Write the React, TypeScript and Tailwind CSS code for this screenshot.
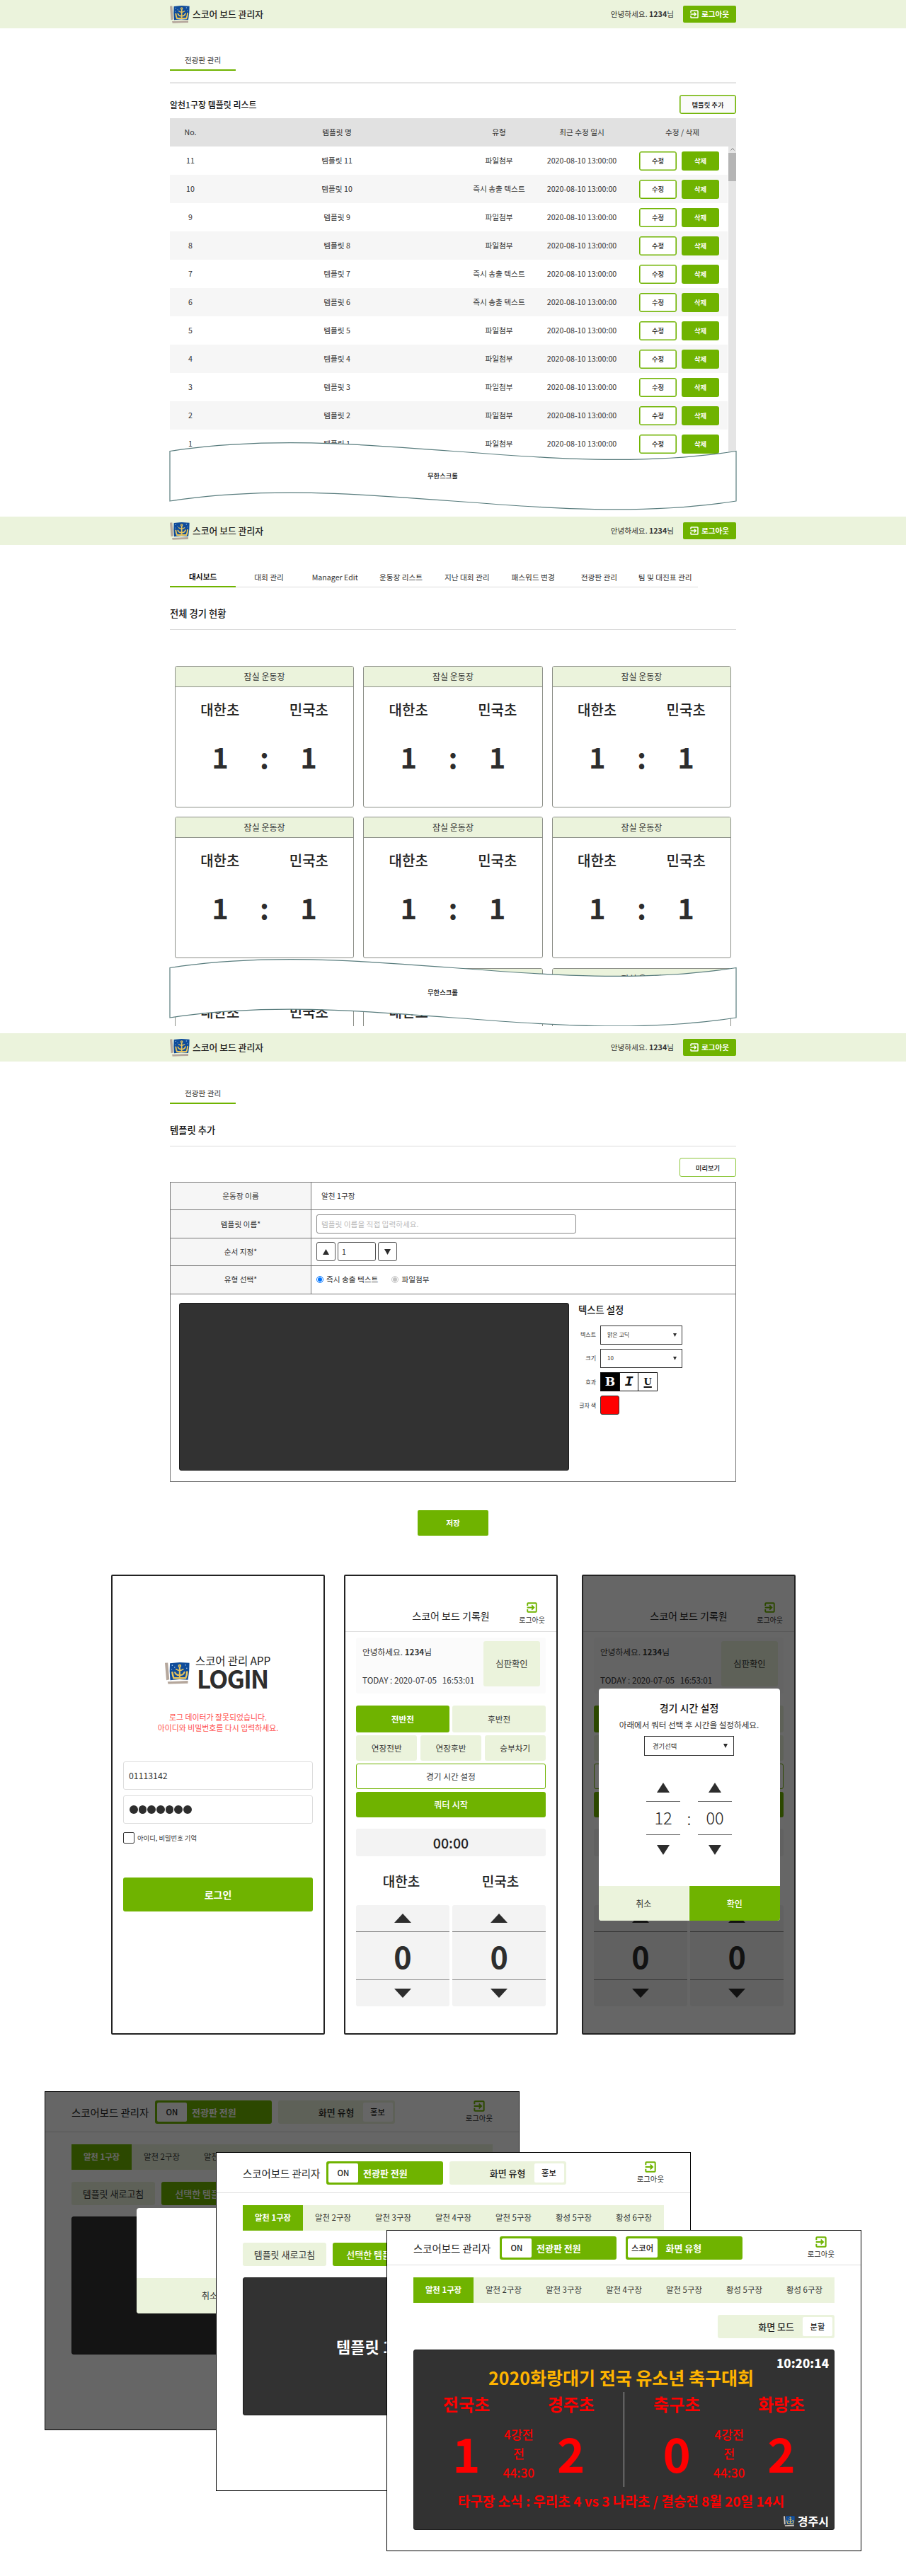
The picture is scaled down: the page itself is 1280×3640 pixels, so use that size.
import React from "react";

type Kids = { children?: React.ReactNode };

function Logo({ className = "", light = false }: { className?: string; light?: boolean }) {
  const frame = light ? "#cfc8c2" : "#b5a79c";
  return (
    <svg viewBox="0 0 84 74" className={className} preserveAspectRatio="none">
      <path d="M0 2 L10 1 L15 58 L5 60 Z" fill={frame} />
      <path d="M9 65 L78 62 L78 71 L11 73 Z" fill={frame} />
      <path d="M17 3 L50 0 L83 2 L82 30 L78 59 L48 57 L18 60 L16 30 Z" fill="#0f4c9a" />
      <g stroke="#e8c45c" strokeWidth="5" fill="none" strokeLinecap="round">
        <path d="M50 18 V50" />
        <circle cx="50" cy="12" r="3.5" strokeWidth="4" />
        <path d="M38 23 Q50 32 62 23" strokeWidth="4" />
        <path d="M34 34 Q38 44 50 43 Q62 44 66 33" />
        <path d="M25 34 Q26 44 30 53 H70 Q75 43 75 32" strokeWidth="6" />
      </g>
      <g fill="#9fc3ea">
        <circle cx="25" cy="10" r="2" />
        <circle cx="33" cy="17" r="1.8" />
        <circle cx="70" cy="9" r="2" />
        <circle cx="74" cy="20" r="1.8" />
        <circle cx="23" cy="24" r="1.6" />
      </g>
    </svg>
  );
}

function ExitIcon({ className = "" }: { className?: string }) {
  return (
    <svg viewBox="0 0 24 24" className={className} fill="none" stroke="currentColor" strokeWidth="3">
      <path d="M2 8 V3.5 A1.5 1.5 0 0 1 3.5 2 H20.5 A1.5 1.5 0 0 1 22 3.5 V20.5 A1.5 1.5 0 0 1 20.5 22 H3.5 A1.5 1.5 0 0 1 2 20.5 V16" />
      <path d="M1 12 H16 M11.5 7 L16.5 12 L11.5 17" />
    </svg>
  );
}

function Tri({ down = false, className = "" }: { down?: boolean; className?: string }) {
  return (
    <svg viewBox="0 0 10 6" preserveAspectRatio="none" className={className}>
      <path d={down ? "M0 0 H10 L5 6 Z" : "M0 6 H10 L5 0 Z"} fill="#2d2d2d" />
    </svg>
  );
}

function Header() {
  return (
    <header className="h-10 bg-[#ebf3dc]">
      <div className="mx-auto flex h-full w-[800px] items-center">
        <Logo className="h-[25px] w-7" />
        <h1 className="ml-1 text-[12.8px] font-medium text-[#222]">스코어 보드 관리자</h1>
        <p className="ml-auto text-[10.67px] text-[#333]">
          안녕하세요. <b className="font-bold">1234</b>님
        </p>
        <button className="ml-[13px] flex h-6 w-[75px] items-center justify-center gap-[4px] rounded-[2px] bg-[#6fb300] text-[10.67px] font-bold text-white">
          <ExitIcon className="h-3 w-3" />
          로그아웃
        </button>
      </div>
    </header>
  );
}

function Wave({ className }: { className: string }) {
  return (
    <div className={"absolute left-[239px] h-[98px] w-[802px] " + className}>
      <svg viewBox="0 0 802 98" className="absolute inset-0 h-full w-full">
        <path
          d="M1 14.5 C267.7 -27 534.3 56 801 14.5 V85 C534.3 126.5 267.7 43.5 1 85 Z"
          fill="#fff"
          stroke="#587c7d"
          strokeWidth="1.2"
        />
      </svg>
      <span className="absolute left-[365px] top-[42px] text-[9.33px] font-medium text-[#111]">무한스크롤</span>
    </div>
  );
}

const rowCols = "grid grid-cols-[58px_356px_102px_132px_1fr] items-center text-center";

function TemplateList() {
  const rows = [11, 10, 9, 8, 7, 6, 5, 4, 3, 2, 1];
  const instant = [10, 7, 6];
  return (
    <section className="relative h-[730px] overflow-hidden">
      <Header />
      <div className="mx-auto w-[800px]">
        <nav className="mt-[31px] flex h-[29px] w-[93.3px] items-center justify-center border-b-2 border-[#6fb300] text-[10.67px]">
          전광판 관리
        </nav>
        <hr className="mt-4 border-0 border-t-2 border-[#e5e5e5]" />
        <div className="mt-4 flex h-[27px] items-center justify-between">
          <h2 className="text-[12px] font-medium text-[#111]">알천1구장 템플릿 리스트</h2>
          <button className="h-[27px] w-20 rounded-[3px] border border-[#6fb300] bg-[#fafafa] text-[9.33px] font-medium text-[#111] shadow-[inset_0_0_0_0.6px_#6fb300]">
            템플릿 추가
          </button>
        </div>
        <div className={rowCols + " mt-[6px] h-10 bg-[#e1e1e1] text-[10.67px]"}>
          <span>No.</span>
          <span>템플릿 명</span>
          <span>유형</span>
          <span>최근 수정 일시</span>
          <span>수정 / 삭제</span>
        </div>
        <div className="flex justify-between">
          <div className="w-[788px]">
            {rows.map((n) => (
              <div key={n} className={rowCols + " h-10 text-[10.67px] even:bg-[#f6f6f6]"}>
                <span>{n}</span>
                <span>템플릿 {n}</span>
                <span>{instant.includes(n) ? "즉시 송출 텍스트" : "파일첨부"}</span>
                <span>2020-08-10 13:00:00</span>
                <span className="flex gap-[7px] pl-[15px] text-[9.33px]">
                  <button className="h-[27px] w-[53px] rounded-[3px] border border-[#6fb300] bg-white font-medium text-[#111] shadow-[inset_0_0_0_0.6px_#6fb300]">
                    수정
                  </button>
                  <button className="h-[27px] w-[53px] rounded-[3px] bg-[#6fb300] font-bold text-white">삭제</button>
                </span>
              </div>
            ))}
          </div>
          <div className="flex w-[11px] flex-col items-center bg-[#e5e5e5]">
            <svg viewBox="0 0 10 9" className="h-[9px] w-[10px]">
              <path d="M2.5 5.5 L5 2.5 L7.5 5.5" stroke="#777" strokeWidth=".9" fill="none" />
            </svg>
            <div className="h-10 w-full bg-[#b5b5b5]" />
          </div>
        </div>
      </div>
      <Wave className="top-[623px]" />
    </section>
  );
}

function MatchCard() {
  return (
    <article className="h-[200px] rounded-[3px] border border-[#8c8f88] bg-white">
      <div className="flex h-[29px] items-center justify-center rounded-t-[2px] border-b border-[#8c8f88] bg-[#ebf3dc] text-[12px]">
        잠실 운동장
      </div>
      <div className="mt-[18px] grid grid-cols-2 text-center text-[20px] font-medium leading-7 text-[#222]">
        <span>대한초</span>
        <span>민국초</span>
      </div>
      <div className="mt-[23px] grid grid-cols-[84px_1fr_84px] px-[21px] text-center text-[40px] font-bold leading-[58px] text-[#2d2d2d]">
        <span>1</span>
        <span>:</span>
        <span>1</span>
      </div>
    </article>
  );
}

function Dashboard() {
  const tabs = ["대시보드", "대회 관리", "Manager Edit", "운동장 리스트", "지난 대회 관리", "패스워드 변경", "전광판 관리", "팀 및 대진표 관리"];
  return (
    <section className="relative h-[720px] overflow-hidden">
      <Header />
      <div className="mx-auto w-[800px]">
        <nav className="mt-[32px] flex text-[10.67px]">
          {tabs.map((t, i) => (
            <a
              key={t}
              className={
                "flex h-[28px] w-[93.3px] items-center justify-center " +
                (i === 0 ? "border-b-2 border-[#6fb300] font-bold text-[#111]" : "border-b border-[#dcdcdc]")
              }
            >
              {t}
            </a>
          ))}
        </nav>
        <h2 className="mt-[27px] text-[13.33px] font-medium leading-5 text-[#111]">전체 경기 현황</h2>
        <hr className="mt-3 border-0 border-t border-[#dcdcdc]" />
        <div className="ml-[7px] mt-[51px] grid w-[786px] grid-cols-3 gap-[13.3px]">
          {Array.from({ length: 9 }, (_, i) => (
            <MatchCard key={i} />
          ))}
        </div>
      </div>
      <Wave className="top-[623px]" />
    </section>
  );
}

function FormRow({ label, children }: Kids & { label: string }) {
  return (
    <div className="flex h-[39.4px] border-b border-[#777] text-[10.67px]">
      <div className="flex w-[199px] items-center justify-center border-r border-[#777] bg-[#f6f6f6]">{label}</div>
      <div className="flex flex-1 items-center pl-[7px]">{children}</div>
    </div>
  );
}

function SettingRow({ label, children }: Kids & { label: string }) {
  return (
    <div className="mb-[6.3px] flex h-[27px] items-center text-[8px]">
      <span className="mr-[6px] w-[25px] text-right">{label}</span>
      {children}
    </div>
  );
}

function MiniSelect({ children }: Kids) {
  return (
    <div className="flex h-[27px] w-[116px] items-center justify-between border border-[#333] pl-[9px] pr-[7px]">
      <span>{children}</span>
      <Tri down className="h-[5px] w-[5px]" />
    </div>
  );
}

function Radio({ on = false }: { on?: boolean }) {
  return (
    <span
      className={
        "flex h-[10px] w-[10px] items-center justify-center rounded-full border bg-white " +
        (on ? "border-[#0075ff]" : "border-[#c4c4c4]")
      }
    >
      <span className={"h-[6px] w-[6px] rounded-full " + (on ? "bg-[#0075ff]" : "bg-[#c4c4c4]")} />
    </span>
  );
}

function TemplateForm() {
  return (
    <section className="h-[765px]">
      <Header />
      <div className="mx-auto w-[800px]">
        <nav className="mt-[31px] flex h-[29px] w-[93.3px] items-center justify-center border-b-2 border-[#6fb300] text-[10.67px]">
          전광판 관리
        </nav>
        <h2 className="mt-[27px] text-[13.33px] font-medium leading-5 text-[#111]">템플릿 추가</h2>
        <hr className="mt-3 border-0 border-t border-[#dcdcdc]" />
        <div className="mt-4 flex justify-end">
          <button className="h-[27px] w-20 rounded-[3px] border border-[#8cc63a] bg-white text-[9.33px] font-medium text-[#111]">
            미리보기
          </button>
        </div>
        <div className="mt-[7px] h-[424px] border border-[#777]">
          <FormRow label="운동장 이름">
            <span className="ml-[7px]">알천 1구장</span>
          </FormRow>
          <FormRow label="템플릿 이름*">
            <div className="flex h-[27px] w-[367px] items-center rounded-[3px] border border-[#888] pl-[6px] text-[#bbb]">
              템플릿 이름을 직접 입력하세요.
            </div>
          </FormRow>
          <FormRow label="순서 지정*">
            <div className="flex gap-[3px]">
              <button className="flex h-[27px] w-[27px] items-center justify-center rounded-[3px] border border-[#555]">
                <Tri className="h-2 w-[9px]" />
              </button>
              <div className="flex h-[27px] w-[54px] items-center rounded-[3px] border border-[#555] pl-[5px]">1</div>
              <button className="flex h-[27px] w-[27px] items-center justify-center rounded-[3px] border border-[#555]">
                <Tri down className="h-2 w-[9px]" />
              </button>
            </div>
          </FormRow>
          <FormRow label="유형 선택*">
            <Radio on />
            <span className="ml-[4px] mr-[19px]">즉시 송출 텍스트</span>
            <Radio />
            <span className="ml-[4px]">파일첨부</span>
          </FormRow>
          <div className="flex pl-3 pt-3">
            <div className="h-[237px] w-[551px] rounded-[3px] border border-[#1c1c1c] bg-[#323232]" />
            <div className="ml-[13px]">
              <h3 className="mb-[12px] text-[13.33px] font-medium leading-5 text-[#111]">텍스트 설정</h3>
              <SettingRow label="텍스트">
                <MiniSelect>맑은 고딕</MiniSelect>
              </SettingRow>
              <SettingRow label="크기">
                <MiniSelect>10</MiniSelect>
              </SettingRow>
              <SettingRow label="효과">
                <div className="flex h-[27px] w-[81px] divide-x divide-[#111] border border-[#111] text-center font-['Liberation_Mono'] text-[20px] font-bold leading-[25px] text-[#111]">
                  <span className="flex-1 bg-black font-['DejaVu_Serif'] text-[17px] text-white">B</span>
                  <span className="flex-1 italic">I</span>
                  <span className="flex-1 font-['DejaVu_Serif'] text-[13px] underline decoration-[1.5px] underline-offset-2">U</span>
                </div>
              </SettingRow>
              <SettingRow label="글자 색">
                <div className="h-[27px] w-[27px] rounded-[3px] border border-[#333] bg-[#f00]" />
              </SettingRow>
            </div>
          </div>
        </div>
        <button className="mx-auto mt-10 block h-9 w-[100px] rounded-[2px] bg-[#6fb300] text-[10.67px] font-bold text-white">
          저장
        </button>
      </div>
    </section>
  );
}

function Phone({ children }: Kids) {
  return <div className="relative h-[650px] w-[302px] overflow-hidden rounded-[2px] border-2 border-[#222] bg-white">{children}</div>;
}

function LoginPhone() {
  return (
    <Phone>
      <div className="flex flex-col px-[15px] pt-[107px]">
        <div className="flex h-[52px] items-center pl-[59px]">
          <Logo className="mt-[8px] h-[31px] w-[35px]" />
          <div className="ml-2">
            <p className="text-[15.5px] leading-[22px] tracking-[-0.1px] text-[#222]">스코어 관리 APP</p>
            <p className="ml-[2px] text-[35px] font-bold leading-[28px] tracking-[-1.6px] text-[#2d2d2d]">LOGIN</p>
          </div>
        </div>
        <p className="mt-[33px] text-center text-[10.9px] leading-[15px] text-[#ff5050]">
          로그 데이터가 잘못되었습니다.
          <br />
          아이디와 비밀번호를 다시 입력하세요.
        </p>
        <div className="mt-[40px] flex h-10 items-center rounded-[3px] border border-[#ddd] pl-[7px] text-[12.3px]">01113142</div>
        <div className="mt-2 flex h-10 items-center gap-[1px] rounded-[3px] border border-[#ddd] pl-2">
          {Array.from({ length: 7 }, (_, i) => (
            <span key={i} className="h-[11.7px] w-[11.7px] rounded-full bg-[#2d2d2d]" />
          ))}
        </div>
        <div className="mt-3 flex items-center gap-1 text-[9.33px]">
          <span className="h-4 w-4 rounded-[2px] border border-[#333]" />
          아이디, 비밀번호 기억
        </div>
        <button className="mt-12 h-12 rounded-[3px] bg-[#6fb300] text-[14px] font-bold text-white">로그인</button>
      </div>
    </Phone>
  );
}

function ScoreStepper() {
  return (
    <div className="flex h-[143px] flex-1 flex-col rounded-[3px] bg-[#f3f3f3]">
      <div className="flex h-[38px] items-center justify-center border-b border-[#888]">
        <Tri className="h-[13px] w-6" />
      </div>
      <div className="flex h-[68px] items-center justify-center border-b border-[#888] text-[43px] font-bold leading-none text-[#2d2d2d]">
        0
      </div>
      <div className="flex h-[37px] items-center justify-center">
        <Tri down className="h-[13px] w-6" />
      </div>
    </div>
  );
}

function RecorderBody() {
  const pale = "flex items-center justify-center rounded-[3px] bg-[#ebf3dc] ";
  return (
    <div className="text-[11.7px]">
      <div className="relative h-[79px] border-b border-[#ddd]">
        <h2 className="pt-[46px] text-center text-[14px] leading-5 text-[#222]">스코어 보드 기록원</h2>
        <div className="absolute right-[16px] top-[37px] flex flex-col items-center text-[10px] leading-[20px]">
          <ExitIcon className="h-[15px] w-[15px] text-[#6fb300]" />
          로그아웃
        </div>
      </div>
      <div className="px-[15px]">
        <div className="mt-2 flex h-[79px] justify-between rounded-[3px] bg-[#fbfbfb] pl-[9px] pr-2 pt-[5px]">
          <div>
            <p className="mt-[5px] leading-5">
              안녕하세요. <b className="font-bold">1234</b>님
            </p>
            <p className="mt-5 whitespace-pre leading-5">{"TODAY : 2020-07-05   16:53:01"}</p>
          </div>
          <div className={pale + "h-16 w-20 text-[12.3px]"}>심판확인</div>
        </div>
        <div className="mt-[17px] grid grid-cols-2 gap-[4.5px]">
          <div className="flex h-[38px] items-center justify-center rounded-[3px] bg-[#6fb300] font-bold text-white">전반전</div>
          <div className={pale}>후반전</div>
        </div>
        <div className="mt-1 grid h-9 grid-cols-3 gap-[4.5px]">
          <div className={pale}>연장전반</div>
          <div className={pale}>연장후반</div>
          <div className={pale}>승부차기</div>
        </div>
        <div className="mt-1 flex h-9 items-center justify-center rounded-[3px] border border-[#6fb300] bg-white">경기 시간 설정</div>
        <div className="mt-1 flex h-9 items-center justify-center rounded-[3px] bg-[#6fb300] text-[12.3px] font-medium text-white">
          쿼터 시작
        </div>
        <div className="mt-4 flex h-[39px] items-center justify-center rounded-[3px] bg-[#f3f3f3] text-[19.5px] font-medium text-[#222]">
          00:00
        </div>
        <div className="-mx-[6px] mt-[21px] grid grid-cols-2 text-center text-[19px] font-medium leading-7 text-[#222]">
          <span>대한초</span>
          <span>민국초</span>
        </div>
        <div className="mt-[20px] flex gap-[4.5px]">
          <ScoreStepper />
          <ScoreStepper />
        </div>
      </div>
    </div>
  );
}

function TimeColumn({ children }: Kids) {
  return (
    <div className="flex w-12 flex-col items-center">
      <Tri className="h-[14px] w-[18px]" />
      <div className="mt-[12px] flex h-[48px] w-full items-center justify-center border-y border-[#666] text-[23.5px] font-light text-[#222]">
        {children}
      </div>
      <Tri down className="mt-[14px] h-[14px] w-[18px]" />
    </div>
  );
}

function TimeModal() {
  return (
    <div className="absolute left-[21.5px] top-[159px] flex h-[328px] w-[256px] flex-col items-center overflow-hidden rounded-[4px] bg-white">
      <h3 className="mt-[17px] text-[14px] font-medium leading-5 text-[#111]">경기 시간 설정</h3>
      <p className="mt-[4px] text-[11.6px] leading-5">아래에서 쿼터 선택 후 시간을 설정하세요.</p>
      <div className="mt-[6px] flex h-[28px] w-[127px] items-center justify-between border border-[#333] pl-[11px] pr-[8px] text-[9.33px]">
        경기선택
        <Tri down className="h-[6px] w-[6px]" />
      </div>
      <div className="mt-[38px] flex items-center gap-[8px]">
        <TimeColumn>12</TimeColumn>
        <span className="w-[9px] text-center text-[23.5px] font-light leading-none">:</span>
        <TimeColumn>00</TimeColumn>
      </div>
      <div className="mt-auto grid h-[49px] w-full grid-cols-2 gap-[1px] text-[12px]">
        <div className="flex items-center justify-center bg-[#ebf3dc]">취소</div>
        <div className="flex items-center justify-center bg-[#6fb300] font-medium text-white">확인</div>
      </div>
    </div>
  );
}

function Phones() {
  return (
    <section className="flex h-[730px] gap-[27px] pl-[157px]">
      <LoginPhone />
      <Phone>
        <RecorderBody />
      </Phone>
      <div className="ml-[7px]">
        <Phone>
          <RecorderBody />
          <div className="absolute inset-0 bg-black/60" />
          <TimeModal />
        </Phone>
      </div>
    </section>
  );
}

function Toggle({ label, knob, on = false, left = false }: { label: string; knob: string; on?: boolean; left?: boolean }) {
  const k = (
    <span className="flex h-[27px] w-[42px] items-center justify-center rounded-[2px] bg-white text-[11.3px] font-medium text-[#222]">
      {knob}
    </span>
  );
  return (
    <div
      className={
        "flex h-[33px] w-[165px] items-center rounded-[3px] px-[3px] text-[13px] " +
        (on ? "bg-[#6fb300] font-bold text-white " : "bg-[#ebf3dc] font-medium text-[#222] ") +
        (left ? "" : "justify-end")
      }
    >
      {left && k}
      <span className={left ? (knob === "ON" ? "ml-[7px]" : "ml-[12px]") : "mr-[12px]"}>{label}</span>
      {!left && k}
    </div>
  );
}

function TabletTop({ score = false }: { score?: boolean }) {
  const fields = ["알천 1구장", "알천 2구장", "알천 3구장", "알천 4구장", "알천 5구장", "황성 5구장", "황성 6구장"];
  return (
    <>
      <div className={"flex justify-between border-b border-[#ddd] pl-[37px] pr-[37px] " + (score ? "h-[49px] pt-2" : "h-[57px] pt-3")}>
        <div className="flex h-[33px] items-center">
          <h2 className="w-[110px] text-[14.4px] text-[#222]">스코어보드 관리자</h2>
          <div className={"flex " + (score ? "ml-[12px] gap-[12.5px]" : "ml-[8px] gap-[8.5px]")}>
            <Toggle label="전광판 전원" knob="ON" on left />
            {score ? <Toggle label="화면 유형" knob="스코어" on left /> : <Toggle label="화면 유형" knob="홍보" />}
          </div>
        </div>
        <div className="flex flex-col items-center text-[10.4px] leading-[18px]">
          <ExitIcon className="h-4 w-4 text-[#6fb300]" />
          로그아웃
        </div>
      </div>
      <div className="mx-[37px] mt-[17px] grid h-9 grid-cols-7 bg-[#ebf3dc] text-[11.4px]">
        {fields.map((f, i) => (
          <div key={f} className={"flex items-center justify-center " + (i === 0 ? "bg-[#6fb300] font-bold text-white" : "")}>
            {f}
          </div>
        ))}
      </div>
    </>
  );
}

function PromoTablet({ children }: Kids) {
  return (
    <>
      <TabletTop />
      <div className="mx-[37px] mt-[17px] flex gap-[9px] text-[13px]">
        <div className="flex h-[33px] w-[118px] items-center justify-center rounded-[3px] bg-[#ebf3dc]">템플릿 새로고침</div>
        <div className="flex h-[33px] w-[140px] items-center justify-center rounded-[3px] bg-[#6fb300] font-medium text-white">
          선택한 템플릿 송출
        </div>
      </div>
      <div className="mx-[37px] mt-4 flex h-[195px] items-center rounded-[3px] border border-[#1c1c1c] bg-[#323232] pl-[131px] text-[22px] font-bold text-white">
        {children}
      </div>
    </>
  );
}

function Half({ home, away, a, b }: { home: string; away: string; a: number; b: number }) {
  return (
    <div className="flex-1">
      <div className="grid grid-cols-2 text-center text-[24px] font-bold leading-[34px]">
        <span>{home}</span>
        <span>{away}</span>
      </div>
      <div className="mt-[5px] grid h-[92px] grid-cols-[84px_1fr_84px] items-center px-8 text-center text-[66.7px] font-bold leading-none">
        <span>{a}</span>
        <div className="flex flex-col pt-[2px] text-[17.3px] font-medium leading-[27px]">
          <span>4강전</span>
          <span>전</span>
          <span>44:30</span>
        </div>
        <span>{b}</span>
      </div>
    </div>
  );
}

function ScoreTablet() {
  return (
    <>
      <TabletTop score />
      <div className="mx-[37px] mt-[17px] flex justify-end">
        <Toggle label="화면 모드" knob="분할" />
      </div>
      <div className="relative mx-[37px] mt-4 h-[255px] rounded-[3px] border border-[#1c1c1c] bg-[#323232] text-[#f00]">
        <span className="absolute right-[7px] top-[6px] text-[17px] font-black leading-6 text-white">10:20:14</span>
        <h3 className="pr-[8px] pt-[20px] text-center text-[25px] font-bold leading-9 text-[#ffb400]">2020화랑대기 전국 유소년 축구대회</h3>
        <div className="mt-[3px] flex h-[134px]">
          <Half home="전국초" away="경주초" a={1} b={2} />
          <div className="w-[1.5px] bg-[#aaa]" />
          <Half home="축구초" away="화랑초" a={0} b={2} />
        </div>
        <p className="pr-[8px] pt-[6px] text-center text-[19px] font-bold leading-7">
          타구장 소식 : 우리초 4 vs 3 나라초 / 결승전 8월 20일 14시
        </p>
        <div className="absolute bottom-0 right-[7px] flex items-center gap-1 text-[16px] font-bold leading-6 text-white">
          <Logo light className="h-[15px] w-4" />
          경주시
        </div>
      </div>
    </>
  );
}

function Tablets() {
  return (
    <section className="relative h-[685px]">
      <div className="absolute left-[63px] top-0 h-[479px] w-[671px] border border-black bg-white">
        <PromoTablet />
        <div className="absolute inset-0 bg-black/60" />
        <div className="absolute left-[129px] top-[164px] flex h-[149px] w-[412px] flex-col justify-end overflow-hidden rounded-[4px] bg-white text-[12.3px]">
          <div className="grid h-[50px] grid-cols-2">
            <div className="flex items-center justify-center bg-[#ebf3dc]">취소</div>
            <div className="flex items-center justify-center bg-[#6fb300] text-white">확인</div>
          </div>
        </div>
      </div>
      <div className="absolute left-[305px] top-[86px] h-[479px] w-[671px] border border-black bg-white">
        <PromoTablet>템플릿 1</PromoTablet>
      </div>
      <div className="absolute left-[546px] top-[196px] h-[454px] w-[671px] border border-black bg-white">
        <ScoreTablet />
      </div>
    </section>
  );
}

export default function App() {
  return (
    <main className="h-[3640px] w-[1280px] overflow-hidden whitespace-nowrap bg-white font-['Noto_Sans_CJK_KR',sans-serif] text-[#333]">
      <TemplateList />
      <Dashboard />
      <div className="h-[10px]" />
      <TemplateForm />
      <Phones />
      <Tablets />
    </main>
  );
}
